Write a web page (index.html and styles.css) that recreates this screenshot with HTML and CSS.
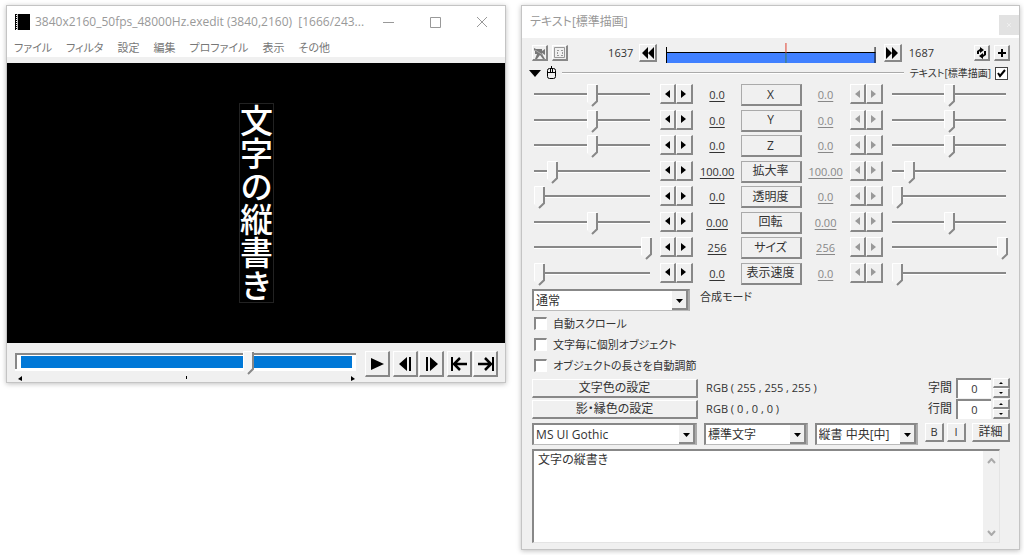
FILE: index.html
```html
<!DOCTYPE html>
<html lang="ja">
<head>
<meta charset="utf-8">
<title>3840x2160_50fps_48000Hz.exedit</title>
<link rel="stylesheet" href="styles.css">
</head>
<body>
<main class="desktop">
  <section class="window">
    <header class="titlebar">
      <svg class="app-icon" width="15" height="16" viewBox="0 0 15 16"><path d="M0 0h15v16H0z"/><path d="M1.5 1v15" stroke="#fff" stroke-dasharray="1 1"/><path d="M2.5 0v16" stroke="#bbb"/></svg>
      <h1 class="title">3840x2160_50fps_48000Hz.exedit (3840,2160)&nbsp; [1666/243...</h1>
      <div class="window-controls">
        <button class="caption" aria-label="最小化"><svg width="12" height="12"><path d="M1 6.5h11"/></svg></button>
        <button class="caption" aria-label="最大化"><svg width="12" height="12"><path d="M1.500 1.500h10v10h-10z"/></svg></button>
        <button class="caption" aria-label="閉じる"><svg width="12" height="12"><path d="M1 1l10 10M11 1L1 11"/></svg></button>
      </div>
    </header>
    <nav class="menu">
      <button>ファイル</button><button>フィルタ</button><button>設定</button><button>編集</button><button>プロファイル</button><button>表示</button><button>その他</button>
    </nav>
    <div class="video"><p class="caption-text">文字の縦書き</p></div>
    <div class="player">
      <div class="seek">
        <input class="seek-range" type="range" min="0" max="100" value="69" aria-label="再生位置">
        <div class="seek-ticks">
          <svg width="4" height="5"><path d="M4 0v5L0 3z"/></svg>
          <svg width="4" height="5"><path d="M1 0h1v3H1z"/></svg>
          <svg width="4" height="5"><path d="M0 0v5l4-2z"/></svg>
        </div>
      </div>
      <button class="raised transport" aria-label="再生"><svg width="20" height="18"><path d="M4 3l13 6-13 6z"/></svg></button>
      <div class="pair">
        <button class="raised transport" aria-label="前のフレーム"><svg width="20" height="18"><path d="M12 2v14L4 9zM14 2h2v14h-2z"/></svg></button>
        <button class="raised transport" aria-label="次のフレーム"><svg width="20" height="18"><path d="M9 2v14l8-7zM5 2h2v14H5z"/></svg></button>
      </div>
      <div class="pair">
        <button class="raised transport" aria-label="先頭へ"><svg width="20" height="18"><path d="M2 2h2v14H2z"/><path d="M18 9H5M11 3L5 9l6 6" fill="none" stroke="#000" stroke-width="2.500"/></svg></button>
        <button class="raised transport" aria-label="末尾へ"><svg width="20" height="18"><path d="M17 2h2v14h-2z"/><path d="M3 9h13M10 3l6 6-6 6" fill="none" stroke="#000" stroke-width="2.500"/></svg></button>
      </div>
    </div>
  </section>

  <section class="window">
    <header class="titlebar">
      <h2 class="title">テキスト[標準描画]</h2>
      <button class="close" aria-label="閉じる"><svg width="8" height="8"><path d="M2 2l4 4M6 2L2 6" stroke="#eee"/></svg></button>
    </header>
    <div class="panel">
      <div class="timeline-row">
        <div class="tools">
          <button class="raised tool" aria-label="カメラ制御"><svg width="14" height="14"><path d="M1 2l2 1h6v2l3-2v6L9 7v1l3 5h-2L7 9 4 13H2l2-5H2V5L1 4z" fill="#777"/><path d="M2 4l8 5" stroke="#aaa"/></svg></button>
          <button class="raised tool" aria-label="クリッピング"><svg width="14" height="14"><path d="M1.500 1.500h10v10h-10z" fill="none" stroke="#999"/><path d="M4 4h2v1H4zM8 4h2v1H8zM4 9h2v1H4zM8 9h2v1H8zM4 6h1v2H4zM9 6h1v2H9z" fill="#999"/></svg></button>
        </div>
        <span class="frame frame-start">1637</span>
        <button class="raised jump" aria-label="前の中間点"><svg width="14" height="14"><path d="M7 1v12L1 7zM13 1v12L7 7z"/></svg></button>
        <svg class="timeline" height="21" role="img" aria-label="1637 - 1687">
          <rect y="10" width="100%" height="10" fill="#4080ff"/><rect y="9" width="100%" height="1"/>
          <rect y="4" width="1" height="16"/>
          <svg x="100%" overflow="visible"><rect x="-1" y="4" width="1" height="16"/></svg>
          <rect x="57%" width="1" height="10" fill="#e04030"/><rect x="57%" y="10" width="1" height="10" fill="#40805c"/>
        </svg>
        <button class="raised jump" aria-label="次の中間点"><svg width="14" height="14"><path d="M1 1v12l6-6zM7 1v12l6-6z"/></svg></button>
        <span class="frame frame-end">1687</span>
        <div class="tools">
          <button class="raised tool" aria-label="入れ替え"><svg width="14" height="14"><path d="M2 8V5l3-2V1l4 3-4 3V5L4 6v2zM11 5v4l-3 2v2L4 10l4-3v2l1-1V5z"/></svg></button>
          <button class="raised tool" aria-label="追加"><svg width="14" height="14"><path d="M6 3h2v3h3v2H8v3H6V8H3V6h3z"/></svg></button>
        </div>
      </div>

      <div class="filter-row">
        <svg width="12" height="7"><path d="M0 0h12L6 7z"/></svg>
        <svg width="11" height="14" fill="none" stroke="#000"><path d="M1.500 4.500q0-2 2-2h4q2 0 2 2v6q0 2-2 2h-4q-2 0-2-2zM1 6.500h9M4.500 3v3M6.500 3v3M5.500 0v3"/></svg>
        <hr class="rule">
        <label class="filter-label">テキスト[標準描画]<input class="tick" type="checkbox" checked></label>
      </div>

      <div class="params" id="params"></div>

      <div class="blend">
        <select class="combo blend-select" id="blend"><option>通常</option></select>
        <label for="blend">合成モード</label>
      </div>

      <div class="options">
        <label class="option"><input class="tick" type="checkbox">自動スクロール</label>
        <label class="option"><input class="tick" type="checkbox">文字毎に個別オブジェクト</label>
        <label class="option"><input class="tick" type="checkbox">オブジェクトの長さを自動調節</label>
      </div>

      <div class="colors">
        <button class="raised wide">文字色の設定</button>
        <span class="rgb">RGB ( 255 , 255 , 255 )</span>
        <label for="spacing">字間</label>
        <div class="spin"><input id="spacing" type="text" value="0"><div class="spin-buttons"><button class="raised" aria-label="字間を増やす"><svg width="4" height="2"><path d="M0 2l2-2 2 2z"/></svg></button><button class="raised" aria-label="字間を減らす"><svg width="4" height="2"><path d="M0 0h4L2 2z"/></svg></button></div></div>
        <button class="raised wide">影・縁色の設定</button>
        <span class="rgb">RGB ( 0 , 0 , 0 )</span>
        <label for="leading">行間</label>
        <div class="spin"><input id="leading" type="text" value="0"><div class="spin-buttons"><button class="raised" aria-label="行間を増やす"><svg width="4" height="2"><path d="M0 2l2-2 2 2z"/></svg></button><button class="raised" aria-label="行間を減らす"><svg width="4" height="2"><path d="M0 0h4L2 2z"/></svg></button></div></div>
      </div>

      <div class="font-row">
        <select class="combo font-family" aria-label="フォント"><option>MS UI Gothic</option></select>
        <select class="combo font-style" aria-label="文字装飾"><option>標準文字</option></select>
        <select class="combo font-align" aria-label="文字揃え"><option>縦書 中央[中]</option></select>
        <div class="font-buttons">
          <button class="raised letter">B</button>
          <button class="raised letter">I</button>
          <button class="raised detail">詳細</button>
        </div>
      </div>

      <div class="editor">
        <textarea aria-label="テキスト">文字の縦書き</textarea>
        <div class="scrollbar">
          <svg width="9" height="6"><path d="M1 5l3.500-4L8 5"/></svg>
          <svg width="9" height="6"><path d="M1 1l3.500 4L8 1"/></svg>
        </div>
      </div>
    </div>
  </section>
</main>
<script src="params.js"></script>
</body>
</html>
```

FILE: params.js
```js
const params = [
  ["X", "0.0", 50],
  ["Y", "0.0", 50],
  ["Z", "0.0", 50],
  ["拡大率", "100.00", 12],
  ["透明度", "0.0", 0],
  ["回転", "0.00", 50],
  ["サイズ", "256", 100],
  ["表示速度", "0.0", 0]
];

const slider = (name, side, position) =>
  `<input class="slider" type="range" value="${position}" aria-label="${name} ${side}">`;

const arrows = (name, disabled) => `<div class="arrows">
  <button class="raised" aria-label="${name} 減" ${disabled}><svg width="5" height="8"><path d="M5 0v8L0 4z"/></svg></button>
  <button class="raised" aria-label="${name} 増" ${disabled}><svg width="5" height="8"><path d="M0 0v8l5-4z"/></svg></button>
</div>`;

document.getElementById("params").innerHTML = params.map(([name, value, position]) =>
  slider(name, "始点", position) +
  arrows(name, "") +
  `<span class="value">${value}</span>` +
  `<button class="param-name">${name}</button>` +
  `<span class="value muted">${value}</span>` +
  arrows(name, "disabled") +
  slider(name, "終点", position)
).join("");
```

FILE: styles.css
```css
* {
  box-sizing: border-box;
}

body {
  margin: 0;
  background: #fff;
  color: #333;
  font: 12px/16px "Open Sans", "Noto Sans CJK JP", sans-serif;
  font-feature-settings: "palt";
}

button,
input,
select,
textarea {
  margin: 0;
  padding: 0;
  border: 0;
  border-radius: 0;
  color: inherit;
  font: inherit;
  font-feature-settings: inherit;
}

svg {
  display: block;
  flex: none;
}

button {
  display: flex;
  align-items: center;
  justify-content: center;
  background: none;
}

.desktop {
  display: grid;
  grid-template-columns: 1fr 1fr;
  align-items: start;
  gap: 15px;
  padding: 5px 4px 5px 6px;
}

.window {
  border: 1px solid #c4c4c4;
  background: #f0f0f0;
  box-shadow: 0 1px 5px rgba(0, 0, 0, 0.25);
}

.titlebar {
  display: flex;
  align-items: center;
  height: 32px;
  padding-left: 8px;
  background: #fff;
  color: #999;
}

.title {
  flex: 1;
  margin: 0;
  font-size: 12px;
  font-weight: 400;
  white-space: nowrap;
}

.app-icon {
  margin-right: 5px;
}

.window-controls {
  display: flex;
}

.caption {
  width: 47px;
  height: 30px;
}

.caption path {
  fill: none;
  stroke: #999;
}

.close {
  width: 20px;
  height: 20px;
  margin-top: 5px;
  background: #e2e2e2;
}

.menu {
  display: flex;
  gap: 14px;
  padding: 0 7px 6px;
  background: linear-gradient(#fff 19px, #f0f0f0 19px);
  color: #777;
  font-size: 11px;
}

.menu button {
  height: 19px;
}

.video {
  display: flex;
  align-items: center;
  justify-content: center;
  aspect-ratio: 16 / 9;
  background: #000;
}

.caption-text {
  margin: 0;
  outline: 1px solid #222;
  color: #fff;
  font: 500 33px/33px "Noto Sans CJK JP", sans-serif;
  font-feature-settings: normal;
  writing-mode: vertical-rl;
}

.player {
  display: flex;
  gap: 3px;
  padding: 8px 7px 0 8px;
}

.seek {
  flex: 1;
  margin-right: 6px;
}

.raised {
  border: 1px solid;
  border-width: 1px 2px 2px 1px;
  border-color: #fff #888 #888 #fff;
  background: #f0f0f0;
}

.transport {
  width: 25px;
  height: 26px;
}

.pair {
  display: flex;
  gap: 1px;
}

.seek-range,
.slider {
  display: block;
  width: 100%;
  min-width: 0;
  appearance: none;
}

.seek-range {
  height: 24px;
  background:
    linear-gradient(#0078d7, #0078d7) 6px 5px / calc(100% - 10px) 12px no-repeat,
    linear-gradient(#888, #888) 0 2px / 100% 2px no-repeat,
    linear-gradient(#888, #888) 0 2px / 2px 16px no-repeat,
    linear-gradient(#fff, #fff) 0 2px / 100% 18px no-repeat;
}

.seek-range::-webkit-slider-thumb,
.slider::-webkit-slider-thumb {
  width: 11px;
  height: 24px;
  appearance: none;
  background: url("data:image/svg+xml,%3Csvg xmlns='http://www.w3.org/2000/svg' width='11' height='24'%3E%3Cpath d='M0 0h11v19l-5 5-6-5z' fill='%23f4f4f4'/%3E%3Cpath d='M.5 19V.5H10' fill='none' stroke='%23fff'/%3E%3Cpath d='M10 1v17l-5 5' fill='none' stroke='%23888' stroke-width='2'/%3E%3C/svg%3E") no-repeat;
}

.seek-ticks {
  display: flex;
  justify-content: space-between;
  padding: 1px 1px 1px 3px;
}

.panel {
  padding: 4px 9px 6px 10px;
}

.timeline-row {
  display: flex;
  align-items: center;
  height: 22px;
}

.tools {
  display: flex;
  gap: 4px;
}

.tool {
  width: 16px;
  height: 16px;
}

.frame {
  font-size: 11px;
}

.frame-start {
  margin: 0 6px 0 40px;
}

.frame-end {
  margin: 0 40px 0 7px;
}

.jump {
  width: 18px;
  height: 18px;
}

.timeline {
  flex: 1;
  width: 0;
  min-width: 0;
  margin: 0 8px 0 9px;
}

.filter-row {
  display: flex;
  align-items: center;
  gap: 5px;
  height: 18px;
  margin: 0 2px 2px -3px;
}

.rule {
  flex: 1;
  height: 2px;
  margin: 0 1px 0 0;
  border: 0;
  border-top: 1px solid #aaa;
  border-bottom: 1px solid #fff;
}

.filter-label {
  display: flex;
  align-items: center;
  gap: 4px;
  font-size: 10px;
}

.tick {
  flex: none;
  width: 13px;
  height: 13px;
  border: 1px solid;
  border-width: 2px 1px 1px 2px;
  border-color: #888 #fff #fff #888;
  background: #fff;
  appearance: none;
}

.tick:checked {
  border: 1px solid #444;
  background: #fff url("data:image/svg+xml,%3Csvg xmlns='http://www.w3.org/2000/svg' width='11' height='11'%3E%3Cpath d='M2 5l2 3 5-6' fill='none' stroke='%23000' stroke-width='2'/%3E%3C/svg%3E") center no-repeat;
}

.params {
  display: grid;
  grid-template-columns: 1fr 33px 48px 61px 48px 33px 1fr;
  grid-template-rows: repeat(8, 1fr);
  height: 204px;
  padding: 0 2px;
}

.slider {
  height: 23px;
  background: linear-gradient(#888 2px, #fff 2px) 0 9px / calc(100% - 2px) 3px no-repeat;
}

.slider::-webkit-slider-thumb {
  height: 23px;
  background-size: 11px 23px;
}

.arrows {
  display: flex;
  height: 20px;
}

.arrows + .value {
  padding-left: 1px;
}

.arrows button {
  flex: 1;
}

.arrows button:disabled {
  fill: #999;
}

.params .slider:nth-child(7n + 1) {
  width: calc(100% - 8px);
}

.params .slider:nth-child(7n) {
  width: calc(100% - 9px);
  margin-left: 9px;
}

.value {
  padding-top: 3px;
  font-size: 11px;
  text-align: center;
  text-decoration: underline;
  text-underline-offset: 2px;
}

.muted {
  color: #888;
}

.param-name {
  height: 22px;
  border: 1px solid;
  border-width: 1px 2px 2px 1px;
  border-color: #aaa #888 #888 #aaa;
}

.blend {
  display: flex;
  align-items: flex-start;
  gap: 10px;
  margin-top: 1px;
  font-size: 11px;
}

.combo {
  width: 100%;
  height: 22px;
  padding: 0 20px 0 2px;
  border: 1px solid;
  border-width: 2px 2px 1px 2px;
  border-color: #888 #aaa #bbb #888;
  background: #fff url("data:image/svg+xml,%3Csvg xmlns='http://www.w3.org/2000/svg' width='16' height='19'%3E%3Cpath d='M0 0h16v19H0z' fill='%23888'/%3E%3Cpath d='M0 0h14v17H0z' fill='%23f0f0f0'/%3E%3Cpath d='M4 8h7l-3.500 4z'/%3E%3C/svg%3E") right top no-repeat;
  font-size: 12px;
  appearance: none;
}

.blend-select {
  width: 158px;
}

.options {
  padding: 2px 0 2px 2px;
  font-size: 11px;
}

.option {
  display: flex;
  align-items: center;
  gap: 6px;
  height: 21px;
}

.colors {
  display: grid;
  grid-template-columns: 166px 1fr 28px 54px;
  align-items: center;
  row-gap: 1px;
}

.wide {
  height: 19px;
}

.rgb {
  padding-left: 8px;
  font-size: 11px;
}

.spin {
  display: flex;
  gap: 2px;
  height: 20px;
}

.spin input {
  width: 35px;
  border-top: 2px solid #888;
  border-left: 2px solid #888;
  background: #fff;
  font-size: 11px;
  text-align: center;
}

.spin-buttons {
  display: grid;
  flex: 1;
}

.font-row {
  display: grid;
  grid-template-columns: 165px 1fr 1fr 85px;
  gap: 7px;
  margin-top: 4px;
}

.font-buttons {
  display: flex;
  gap: 3px;
}

.letter,
.detail {
  width: 19px;
  height: 19px;
  font-size: 11px;
}

.detail {
  width: auto;
  flex: 1;
  margin-left: 3px;
  font-size: 12px;
}

.editor {
  display: flex;
  height: 94px;
  margin: 4px 10px 0 0;
  border: 1px solid;
  border-width: 2px 1px 1px 2px;
  border-color: #888 #e4e4e4 #e4e4e4 #888;
  background: #fff;
}

.editor textarea {
  flex: 1;
  padding: 1px 4px;
  background: #fff;
  resize: none;
}

.scrollbar {
  display: flex;
  flex-direction: column;
  justify-content: space-between;
  align-items: center;
  width: 16px;
  padding: 7px 0 6px;
  background: #f0f0f0;
}

.scrollbar path {
  fill: none;
  stroke: #aaa;
  stroke-width: 2;
}
```
